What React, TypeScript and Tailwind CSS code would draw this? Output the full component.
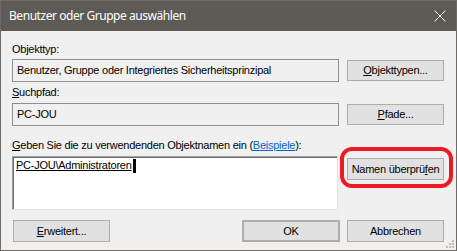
import React from "react";

const font = { fontFamily: '"Liberation Sans", Arial, sans-serif' };

function Btn({ children, className = "" }: { children: React.ReactNode; className?: string }) {
  return (
    <div
      className={`flex items-center justify-center bg-[#e1e1e1] border border-[#adadad] text-[11px] text-black leading-none whitespace-nowrap ${className}`}
    >
      {children}
    </div>
  );
}

export default function App() {
  return (
    <div className="w-[457px] h-[251px] overflow-hidden" style={font}>
      <div className="relative w-[457px] h-[251px] bg-[#f0f0f0] border border-[#6e6a66] flex flex-col">
        {/* Title bar */}
        <div className="h-[30px] bg-[#5e5a56] flex items-center justify-between pl-[8px] pr-[9px] shrink-0">
          <span
            className="text-white text-[12px] leading-none tracking-[-0.45px]"
            style={{ fontFamily: '"Noto Sans", "Open Sans", sans-serif' }}
          >
            Benutzer oder Gruppe auswählen
          </span>
          <svg width="12" height="12" viewBox="0 0 12 12" className="mr-[1px]">
            <path d="M0.5 0.5 L11.5 11.5 M11.5 0.5 L0.5 11.5" stroke="#ffffff" strokeWidth="1" />
          </svg>
        </div>

        {/* Body */}
        <div className="flex flex-col pl-[11px] pr-[12px] text-[11px] text-black tracking-[-0.25px]">
          {/* Objekttyp */}
          <div className="mt-[12px] h-[13px] leading-[13px]">Objekttyp:</div>
          <div className="mt-[3px] flex items-center gap-[8px]">
            <div className="w-[327px] h-[23px] border border-[#8f8f8f] bg-[#f0f0f0] flex items-center pl-[4px] leading-none">
              Benutzer, Gruppe oder Integriertes Sicherheitsprinzipal
            </div>
            <Btn className="w-[97px] h-[21px]">
              <span><span className="underline">O</span>bjekttypen...</span>
            </Btn>
          </div>

          {/* Suchpfad */}
          <div className="mt-[4px] h-[13px] leading-[13px]">
            <span className="underline">S</span>uchpfad:
          </div>
          <div className="mt-[4px] flex items-center gap-[8px]">
            <div className="w-[327px] h-[23px] border border-[#8f8f8f] bg-[#f0f0f0] flex items-center pl-[4px] leading-none">
              PC-JOU
            </div>
            <Btn className="w-[97px] h-[21px]">
              <span><span className="underline">P</span>fade...</span>
            </Btn>
          </div>

          {/* Geben Sie */}
          <div className="mt-[13px] h-[13px] leading-[13px]">
            <span className="underline">G</span>eben Sie die zu verwendenden Objektnamen ein (
            <span className="text-[#0066cc] underline">Beispiele</span>):
          </div>
          <div className="mt-[4px] flex items-start gap-[9px]">
            <div className="w-[326px] h-[54px] bg-white border-t border-l border-[#a0a0a0] border-r border-b border-r-[#e3e3e3] border-b-[#e3e3e3] shadow-[inset_1px_1px_0_#696969] pl-[3px] pt-[2px]">
              <div className="flex items-start leading-[13px]">
                <span className="underline decoration-black">PC-JOU\Administratoren</span>
                <span className="inline-block w-[3px] h-[14px] bg-black ml-[1px]" />
              </div>
            </div>
            <Btn className="w-[97px] h-[22px] mt-[2px]">
              <span>Namen überprü<span className="underline">f</span>en</span>
            </Btn>
          </div>

          {/* Bottom buttons */}
          <div className="mt-[10px] flex items-center">
            <Btn className="w-[97px] h-[22px] ml-[1px]">
              <span><span className="underline">E</span>rweitert...</span>
            </Btn>
            <div className="flex-1" />
            <Btn className="w-[98px] h-[22px] border-2 border-[#0078d7]">OK</Btn>
            <Btn className="w-[97px] h-[22px] ml-[7px]">Abbrechen</Btn>
          </div>
        </div>

        {/* Resize grip */}
        <svg width="8" height="8" viewBox="0 0 8 8" className="absolute right-[2px] bottom-[2px]">
          <rect x="6" y="0" width="2" height="2" fill="#bdbdbd" />
          <rect x="3" y="3" width="2" height="2" fill="#bdbdbd" />
          <rect x="6" y="3" width="2" height="2" fill="#bdbdbd" />
          <rect x="0" y="6" width="2" height="2" fill="#bdbdbd" />
          <rect x="3" y="6" width="2" height="2" fill="#bdbdbd" />
          <rect x="6" y="6" width="2" height="2" fill="#bdbdbd" />
        </svg>

        {/* Red annotation */}
        <div className="absolute left-[339px] top-[146px] w-[113px] h-[41px] border-[4px] border-[#ed1c24] rounded-[12px] pointer-events-none" />
      </div>
    </div>
  );
}
